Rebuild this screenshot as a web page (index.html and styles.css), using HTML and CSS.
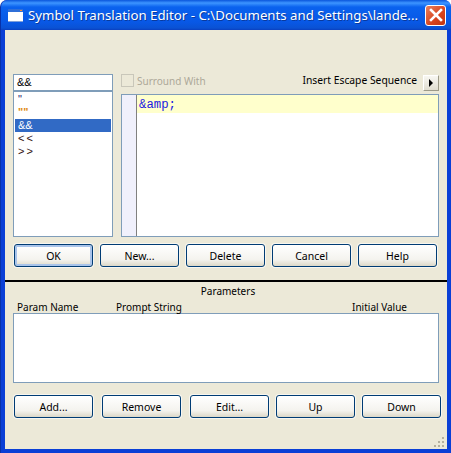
FILE: index.html
```html
<!DOCTYPE html>
<html lang="en">
<head>
    <meta charset="UTF-8">
    <title>Symbol Translation Editor</title>
    <link rel="stylesheet" href="styles.css">
</head>
<body>
    <div class="window">
        <div class="title-bar">
            <svg class="app-icon" width="15" height="13" viewBox="0 0 15 13">
                <rect x="0" y="0" width="15" height="13" fill="#fff"/>
                <rect x="0" y="0" width="15" height="3" fill="#2f6fd8"/>
                <rect x="12" y="1" width="2" height="1" fill="#f08a3c"/>
                <rect x="0" y="12" width="15" height="1" fill="#7f9fd8"/>
            </svg>
            <span class="title-text">Symbol Translation Editor - C:\Documents and Settings\lande...</span>
            <button class="close-btn">
                <svg width="14" height="14" viewBox="0 0 14 14">
                    <path d="M2 2 L12 12 M12 2 L2 12" stroke="#fff" stroke-width="2.6" stroke-linecap="square"/>
                </svg>
            </button>
        </div>
        <div class="client">
            <div class="top-pane">
                <div class="editor-row">
                    <div class="symbol-col">
                        <div class="symbol-input">&amp;&amp;</div>
                        <ul class="symbol-list">
                            <li class="sym-navy">"</li>
                            <li class="sym-orange">""</li>
                            <li class="selected">&amp;&amp;</li>
                            <li class="sym-spaced">&lt;&lt;</li>
                            <li class="sym-spaced">&gt;&gt;</li>
                        </ul>
                    </div>
                    <div class="editor-col">
                        <div class="editor-tools">
                            <label class="surround"><span class="checkbox"></span>Surround With</label>
                            <span class="insert-label">Insert Escape Sequence</span>
                            <button class="arrow-btn"><span class="arrow"></span></button>
                        </div>
                        <div class="code-box">
                            <div class="gutter"></div>
                            <div class="code-area">
                                <div class="code-line"><span class="code-blue">&amp;amp;</span></div>
                            </div>
                        </div>
                    </div>
                </div>
                <div class="button-row row-one">
                    <button class="btn default">OK</button>
                    <button class="btn">New...</button>
                    <button class="btn">Delete</button>
                    <button class="btn">Cancel</button>
                    <button class="btn">Help</button>
                </div>
            </div>
            <div class="divider"></div>
            <div class="bottom-pane">
                <div class="params-title">Parameters</div>
                <div class="params-head">
                    <span class="col-name">Param Name</span>
                    <span class="col-prompt">Prompt String</span>
                    <span class="col-value">Initial Value</span>
                </div>
                <div class="params-list"></div>
                <div class="button-row row-two">
                    <button class="btn">Add...</button>
                    <button class="btn">Remove</button>
                    <button class="btn">Edit...</button>
                    <button class="btn">Up</button>
                    <button class="btn">Down</button>
                </div>
            </div>
            <svg class="grip" width="12" height="12" viewBox="0 0 12 12">
                <path d="M8 0h2v2h-2z M4 4h2v2h-2z M8 4h2v2h-2z M0 8h2v2h-2z M4 8h2v2h-2z M8 8h2v2h-2z" fill="#b3b09e"/>
            </svg>
        </div>
    </div>
</body>
</html>
```

FILE: styles.css
```css
/* Global Styles */
* {
    margin: 0;
    padding: 0;
    box-sizing: border-box;
    font-family: 'Noto Sans', Tahoma, sans-serif;
}

body {
    width: 451px;
    height: 453px;
    overflow: hidden;
    background: #fff;
    font-size: 10.5px;
    color: #000;
}

.window {
    width: 451px;
    height: 453px;
    padding: 0 4px 4px 4px;
    background: #0a3fd6;
    border-radius: 7px 7px 0 0;
    border-left: 1px solid #0831a8;
    display: flex;
    flex-direction: column;
}

/* Title bar */
.title-bar {
    height: 30px;
    margin: 0 -4px 0 -4px;
    padding: 0 5px 0 7px;
    display: flex;
    align-items: center;
    border-radius: 7px 7px 0 0;
    background: linear-gradient(to bottom, #0a56dc 0, #3d95ff 3px, #0a62ee 7px, #0858e6 22px, #0a52d4 28px, #0a3fc0 30px);
}

.app-icon {
    flex: none;
}

.title-text {
    margin-left: 5px;
    flex: 1;
    color: #fff;
    font-size: 13.25px;
    white-space: nowrap;
    text-shadow: 1px 1px 0 #0a3a9c;
}

.close-btn {
    width: 21px;
    height: 21px;
    border: 1px solid #fff;
    border-radius: 3px;
    background: linear-gradient(135deg, #e8805e, #d8431c 60%, #c03410);
    display: flex;
    align-items: center;
    justify-content: center;
}

/* Client area */
.client {
    position: relative;
    flex: 1;
    background: #ece9d8;
    display: flex;
    flex-direction: column;
}

.top-pane {
    padding: 44px 8px 0 8px;
}

.editor-row {
    display: flex;
    gap: 8px;
}

.symbol-col {
    width: 100px;
    flex: none;
}

.symbol-input {
    height: 17px;
    padding-left: 3px;
    background: #fff;
    border: 1px solid #7f9db9;
    font-family: 'Liberation Sans', sans-serif;
    font-size: 11px;
    line-height: 15px;
}

.symbol-list {
    height: 146px;
    padding: 1px 1px 0;
    list-style: none;
    background: #fff;
    border: 1px solid #7f9db9;
}

.symbol-list li {
    height: 13px;
    padding-left: 3px;
    font-family: 'Liberation Sans', sans-serif;
    font-size: 11px;
    line-height: 13px;
}

.sym-navy {
    color: #1a1a70;
}

.symbol-list .sym-orange {
    color: #e08a10;
    font-weight: bold;
}

.symbol-list .sym-spaced {
    letter-spacing: 2px;
    color: #301010;
}

.symbol-list .selected {
    background: #316ac5;
    color: #fff;
}

.editor-col {
    flex: 1;
    display: flex;
    flex-direction: column;
}

.editor-tools {
    height: 20px;
    display: flex;
    align-items: flex-start;
}

.surround {
    display: flex;
    align-items: center;
    gap: 3px;
    color: #aca899;
    height: 13px;
    font-size: 10px;
}

.checkbox {
    width: 13px;
    height: 13px;
    border: 1px solid #c9c7ba;
    background: #ece9d8;
}

.insert-label {
    margin-left: auto;
    line-height: 13px;
    font-size: 10.3px;
}

.arrow-btn {
    width: 16px;
    height: 16px;
    margin: 1px 0 0 6px;
    background: linear-gradient(to bottom, #f8f7f2, #e0ddd0);
    border: 1px solid;
    border-color: #fff #9d9a88 #9d9a88 #fff;
    display: flex;
    align-items: center;
    justify-content: center;
}

.arrow {
    border-left: 4px solid #000;
    border-top: 4px solid transparent;
    border-bottom: 4px solid transparent;
}

.code-box {
    height: 143px;
    background: #fff;
    border: 1px solid #7f9db9;
    display: flex;
}

.gutter {
    width: 15px;
    background: #f0f0fc;
    border-right: 1px solid #808080;
}

.code-area {
    flex: 1;
}

.code-line {
    height: 18px;
    padding: 2px 0 0 2px;
    background: #ffffcc;
    line-height: 14px;
}

.code-blue {
    color: #1a1ae0;
    font-family: 'Liberation Mono', monospace;
    font-size: 12.3px;
}

/* Buttons */
.button-row {
    display: flex;
}

.row-one {
    margin-top: 7px;
    padding-left: 1px;
    gap: 7px;
}

.row-two {
    margin-top: 12px;
    padding-left: 1px;
}

.row-two .btn + .btn {
    margin-left: 9px;
}

.row-two .btn:nth-child(4),
.row-two .btn:nth-child(5) {
    margin-left: 7px;
}

.btn {
    flex: none;
    width: 79px;
    height: 23px;
    font-size: 10.5px;
    color: #000;
    border: 1px solid #003c74;
    border-radius: 3px;
    background: linear-gradient(to bottom, #fff, #f4f3ee 70%, #dcd8c8);
    box-shadow: 0 0 0 1px #f7f6f0;
}

.btn.default {
    box-shadow: 0 0 0 1px #f7f6f0, inset 0 0 0 2px #a9c4ea;
}

.divider {
    height: 2px;
    margin-top: 13px;
    background: #000;
}

/* Parameters */
.bottom-pane {
    padding: 0 8px 0 8px;
}

.params-title {
    margin-top: 2px;
    padding-left: 4px;
    text-align: center;
    line-height: 15px;
    font-size: 10px;
}

.params-head {
    height: 14px;
    display: flex;
    line-height: 17px;
    font-size: 10px;
}

.col-name {
    margin-left: 4px;
    width: 99px;
}

.col-value {
    margin-left: auto;
    margin-right: 32px;
}

.params-list {
    height: 70px;
    background: #fff;
    border: 1px solid #7f9db9;
}

.grip {
    position: absolute;
    right: 1px;
    bottom: 0;
}
```
